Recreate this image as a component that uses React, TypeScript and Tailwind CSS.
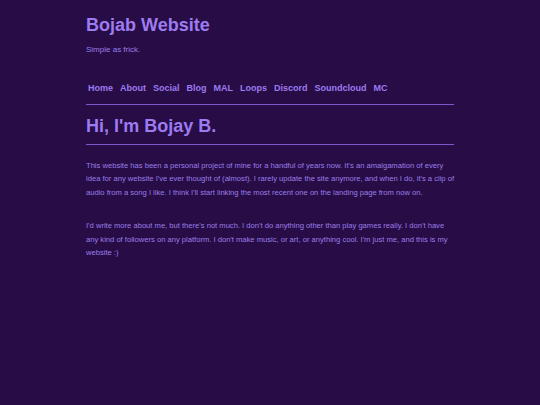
export default function App() {
  const links = ["Home", "About", "Social", "Blog", "MAL", "Loops", "Discord", "Soundcloud", "MC"];

  return (
    <div className="min-h-[405px] w-full bg-[#270c45] font-['Liberation_Sans',Arial,sans-serif] text-[#9c7ee8]">
      <div className="mx-auto w-[368px] pt-[14px]">
        {/* header */}
        <h2 className="text-[18px] font-bold leading-[22px] text-[#9d7bf0]">Bojab Website</h2>
        <p className="mt-[9px] text-[8px] leading-[10px]">Simple as frick.</p>

        <nav className="mt-[27px] flex gap-[7px] px-[2px] text-[9px] font-bold leading-[12px] text-[#9d7bf0]">
          {links.map((l) => (
            <a key={l} href="#">
              {l}
            </a>
          ))}
        </nav>
        <hr className="mt-[10px] border-t border-[#7b58cc]" />

        {/* body */}
        <h1 className="mt-[10px] text-[18px] font-bold leading-[22px] text-[#9d7bf0]">Hi, I'm Bojay B.</h1>
        <hr className="mt-[7px] border-t border-[#7b58cc]" />

        <p className="mt-[14px] text-[7.6px] leading-[13.4px]">
          This website has been a personal project of mine for a handful of years now. It's an amalgamation of every
          idea for any website I've ever thought of (almost). I rarely update the site anymore, and when I do, it's a
          clip of audio from a song I like. I think I'll start linking the most recent one on the landing page from now
          on.
        </p>
        <p className="mt-[20px] text-[7.6px] leading-[13.4px]">
          I'd write more about me, but there's not much. I don't do anything other than play games really. I don't have
          any kind of followers on any platform. I don't make music, or art, or anything cool. I'm just me, and this is
          my website :)
        </p>
      </div>
    </div>
  );
}
